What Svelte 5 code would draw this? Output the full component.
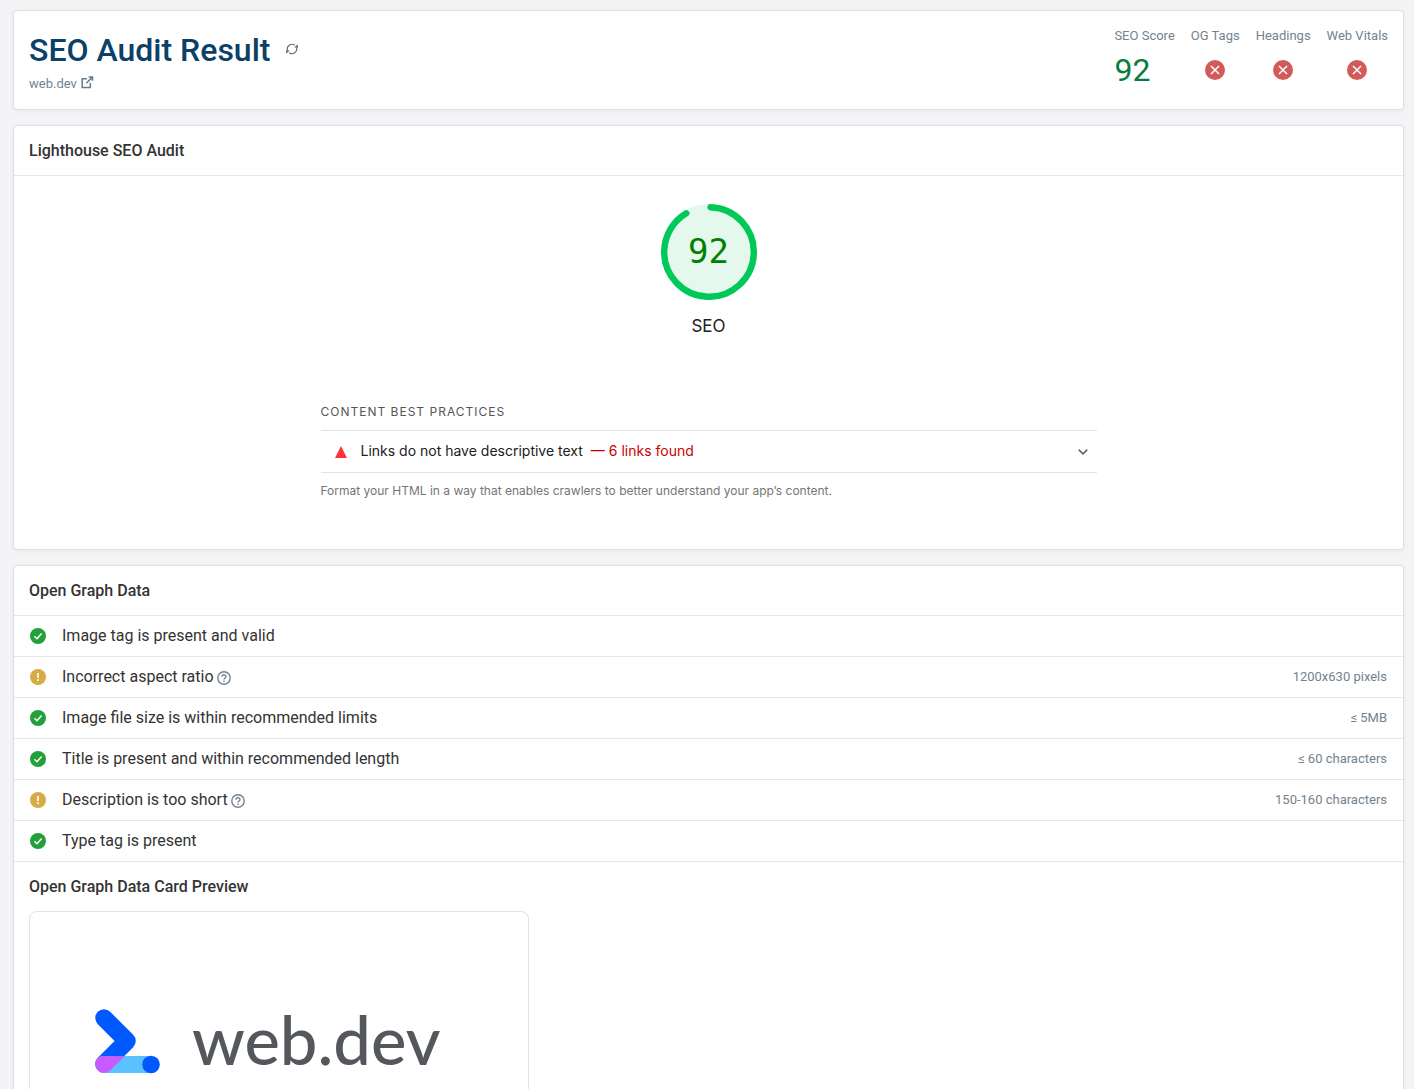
<script>
  const checks = ['OG Tags', 'Headings', 'Web Vitals'];
  const rows = [
    { ok: true, text: 'Image tag is present and valid' },
    { ok: false, text: 'Incorrect aspect ratio', hint: '1200x630 pixels' },
    { ok: true, text: 'Image file size is within recommended limits', hint: '≤ 5MB' },
    { ok: true, text: 'Title is present and within recommended length', hint: '≤ 60 characters' },
    { ok: false, text: 'Description is too short', hint: '150-160 characters' },
    { ok: true, text: 'Type tag is present' }
  ];
  const score = 92;
  const radius = 56;
  const arc = (score / 100) * 2 * Math.PI * radius - 4;
</script>

<main>
  <header class="card top">
    <div>
      <div class="title">
        <h1>SEO Audit Result</h1>
        <button class="icon-btn" aria-label="Refresh">
          <svg width="12" height="12" viewBox="0 0 12 12" fill="none" stroke="#5d6b78" stroke-width="1.2">
            <path d="M1.500 7.500A4.700 4.700 0 0 1 8.800 2.300M10.500 4.500A4.700 4.700 0 0 1 3.200 9.700" />
            <path d="M8.300 4.500L11.900 4.700L11.700 1.300ZM3.700 7.500L.1 7.300L.3 10.700Z" fill="#5d6b78" stroke="none" />
          </svg>
        </button>
      </div>
      <a class="site" href="#site">
        web.dev
        <svg width="13" height="13" viewBox="0 0 13 13" fill="none" stroke="#6a7a89" stroke-width="1.5">
          <path d="M6 2.700H1.200V11.500H9.300V7M5.300 7.300L11 1.600M7.700 .9H11.500V4.800" />
        </svg>
      </a>
    </div>
    <div class="scores">
      <div class="score"><span>SEO Score</span><strong>{score}</strong></div>
      {#each checks as name}
        <div class="score mid">
          <span>{name}</span>
          <svg width="20" height="20" viewBox="0 0 20 20" role="img" aria-label="Failed">
            <circle cx="10" cy="10" r="10" fill="#d15b5b" />
            <path d="M6 6L14 14M14 6L6 14" stroke="#fff" stroke-width="1.5" />
          </svg>
        </div>
      {/each}
    </div>
  </header>

  <section class="card">
    <h2 class="head">Lighthouse SEO Audit</h2>
    <div class="lighthouse">
      <div class="gauge">
        <svg width="96" height="96" viewBox="0 0 120 120">
          <circle cx="60" cy="60" r="60" fill="#e5f8ed" />
          <circle class="arc" cx="60" cy="60" r={radius} stroke-dasharray="{arc} 352" />
        </svg>
        <span class="num">{score}</span>
      </div>
      <div class="label">SEO</div>
      <div class="audits">
        <h3>CONTENT BEST PRACTICES</h3>
        <button class="audit">
          <svg width="12" height="12" viewBox="0 0 12 12"><path d="M6 0L12 12H0Z" fill="#ff3333" /></svg>
          <span>Links do not have descriptive text</span>
          <em>— 6 links found</em>
          <svg class="chev" width="10" height="6" viewBox="0 0 10 6" fill="none" stroke="#616161" stroke-width="1.5">
            <path d="M.7 .6L5 4.900L9.300 .6" />
          </svg>
        </button>
        <p>Format your HTML in a way that enables crawlers to better understand your app’s content.</p>
      </div>
    </div>
  </section>

  <section class="card">
    <h2 class="head">Open Graph Data</h2>
    <ul>
      {#each rows as row}
        <li>
          {#if row.ok}
            <svg width="16" height="16" viewBox="0 0 16 16" role="img" aria-label="Passed">
              <circle cx="8" cy="8" r="8" fill="#21a03c" />
              <path d="M4.400 8.300L7 10.700L11.600 5.500" fill="none" stroke="#fff" stroke-width="1.5" />
            </svg>
          {:else}
            <svg width="16" height="16" viewBox="0 0 16 16" role="img" aria-label="Warning">
              <circle cx="8" cy="8" r="8" fill="#d6ad44" />
              <path d="M8 4V9M8 10.300V12" stroke="#fff" stroke-width="1.700" />
            </svg>
          {/if}
          <span class="text">{row.text}</span>
          {#if !row.ok}
            <button class="icon-btn help" aria-label="Help">
              <svg width="14" height="14" viewBox="0 0 14 14" fill="none" stroke="#74828f" stroke-width="1.400">
                <circle cx="7" cy="7" r="6.200" />
                <path d="M5 5.700C5 3.200 9 3.200 9 5.500C9 6.900 7 7 7 8.600M7 9.600V11" />
              </svg>
            </button>
          {/if}
          {#if row.hint}<span class="hint">{row.hint}</span>{/if}
        </li>
      {/each}
    </ul>
    <div class="preview">
      <h2>Open Graph Data Card Preview</h2>
      <a class="og" href="#preview">
        <svg width="65" height="65" viewBox="0 0 65 65" aria-hidden="true">
          <path d="M9 9L32 32L9 55" fill="none" stroke="#0059ff" stroke-width="17.500" stroke-linecap="round" stroke-linejoin="round" />
          <path d="M9 47H56V64H9A8.500 8.500 0 0 1 9 47Z" fill="#5bc2ff" />
          <path d="M5 47.500L6 47H30L15 61.500A8.700 8.700 0 1 1 5 47.500Z" fill="#c65cff" />
          <circle cx="56" cy="55.500" r="8.800" fill="#0059ff" />
        </svg>
        <span>web.dev</span>
      </a>
    </div>
  </section>
</main>

<style>
  :global(body) { background: #f4f3f6; }
  main {
    box-sizing: border-box;
    height: 100vh;
    overflow: hidden;
    padding: 10px 10px 0 13px;
    display: flex;
    flex-direction: column;
    gap: 15px;
    font-family: Roboto, sans-serif;
    font-size: 16px;
    line-height: 24px;
    color: #333;
  }
  h1, h2, h3, p, ul { margin: 0; padding: 0; }
  button { font: inherit; color: inherit; background: none; border: 0; padding: 0; cursor: pointer; }
  svg { display: block; flex: none; }
  .card {
    flex: none;
    background: #fff;
    border: 1px solid #dedfe0;
    border-radius: 4px;
    box-shadow: 0 1px 4px rgba(0, 0, 0, 0.06);
  }
  .top { display: flex; justify-content: space-between; padding: 15px 15px 14px; }
  .title { display: flex; align-items: center; gap: 16px; }
  h1 { font-size: 32px; line-height: 48px; font-weight: 500; color: #0b4167; }
  .title .icon-btn { padding-bottom: 2px; }
  .site {
    display: flex;
    align-items: center;
    gap: 4px;
    font-size: 13px;
    line-height: 19px;
    color: #74828f;
    text-decoration: none;
  }
  .site svg { margin-bottom: 2px; }
  .scores { display: flex; gap: 16px; }
  .score { display: flex; flex-direction: column; font-size: 13px; line-height: 19px; color: #74828f; }
  .score strong { font-size: 32px; line-height: 50px; font-weight: 400; color: #067d3a; }
  .mid { align-items: center; gap: 15px; }
  h2 { font-size: 16px; line-height: 24px; font-weight: 500; }
  .head { padding: 13px 15px 12px; border-bottom: 1px solid #e6e7e8; }

  .lighthouse {
    display: flex;
    flex-direction: column;
    align-items: center;
    padding: 28px 15px 50px;
    font-family: Inter, sans-serif;
  }
  .gauge { display: grid; place-items: center; }
  .gauge > * { grid-area: 1 / 1; }
  .arc {
    fill: none;
    stroke: #00c95a;
    stroke-width: 8;
    stroke-linecap: round;
    transform: rotate(-88deg);
    transform-origin: 50% 50%;
  }
  .num { padding-bottom: 2px; font: 34px/40px 'DejaVu Sans Mono', monospace; color: #018000; }
  .label { margin-top: 14px; font-size: 17px; color: #212121; }
  .audits { width: 100%; max-width: 776px; margin-top: 62px; }
  h3 { font-size: 12px; line-height: 24px; font-weight: 400; letter-spacing: 1px; color: #555; }
  .audit {
    box-sizing: border-box;
    display: flex;
    align-items: center;
    width: 100%;
    height: 43px;
    margin-top: 6px;
    padding: 0 9px 0 14px;
    border: solid #e4e4e4;
    border-width: 1px 0;
    font-size: 14px;
    color: #212121;
  }
  .audit span, .audit em { padding-bottom: 2px; }
  .audit span { margin-left: 14px; }
  .audit em { margin-left: 8px; font-style: normal; color: #cc0000; }
  .chev { margin-left: auto; }
  .audits p { font-size: 12px; line-height: 16px; margin-top: 10px; color: #757575; }

  ul { list-style: none; }
  li {
    display: flex;
    align-items: center;
    height: 40px;
    padding: 0 16px;
    border-bottom: 1px solid #e6e7e8;
  }
  .text { margin-left: 16px; }
  .help { margin: 2px 0 0 3px; }
  .hint { margin-left: auto; font-size: 13px; color: #74828f; }

  .preview { padding: 13px 15px 16px; }
  .og {
    box-sizing: border-box;
    display: flex;
    align-items: center;
    gap: 32px;
    width: 100%;
    max-width: 500px;
    height: 260px;
    margin-top: 12px;
    padding: 0 65px;
    border: 1px solid #dde3ea;
    border-radius: 8px;
    font: 500 67px/80px Lato, sans-serif;
    color: #54585d;
    text-decoration: none;
  }
  .og span { padding-bottom: 4px; }
</style>
